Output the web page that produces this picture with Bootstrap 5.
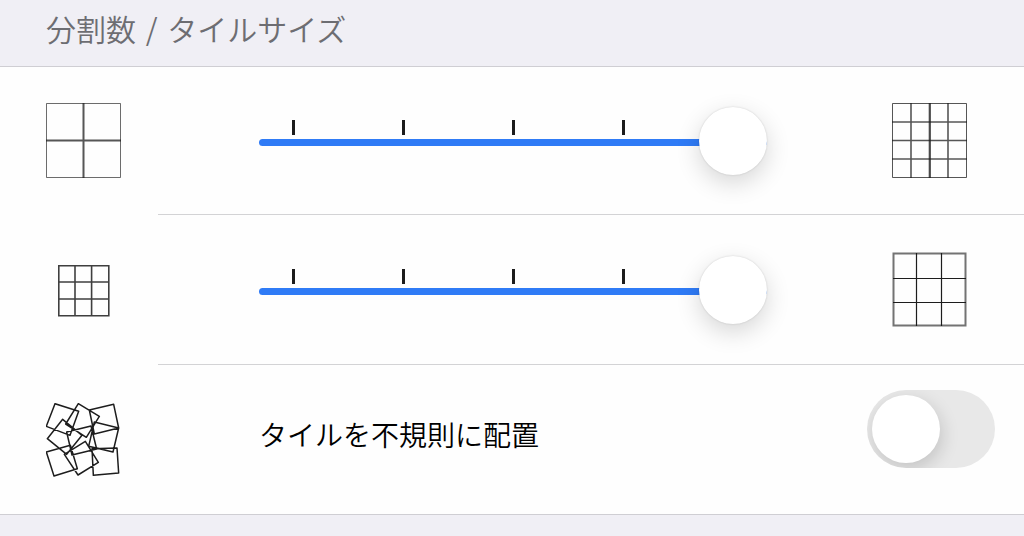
<!DOCTYPE html>
<html lang="ja">
<head>
<meta charset="utf-8">
<meta name="viewport" content="width=device-width, initial-scale=1">
<title>分割数 / タイルサイズ</title>
<link href="https://cdn.jsdelivr.net/npm/bootstrap@5.3.0/dist/css/bootstrap.min.css" rel="stylesheet">
<style>
  body { background: #f0eff5; font-family: "Noto Sans CJK JP", sans-serif; font-weight: 350; color: #000; }
  .section-title { font-size: 30px; line-height: 44px; font-weight: 350; color: #6d6d72; padding: 6px 46px 16px; }
  .section-title span { margin: 0 3px; }
  .settings { background: #fefefe; border-top: 1px solid #cfced3; border-bottom: 1px solid #cfced3; }
  .setting { min-height: 147px; }
  .setting-icon { width: 158px; padding-left: 46px; }
  .setting-icon svg, .setting-end svg { display: block; width: 75px; height: 75px; }
  .setting-body { padding-left: 101px; }
  .setting + .setting .setting-body { border-top: 1px solid #d3d3d5; }
  .setting + .setting .setting-icon { padding-top: 2px; }
  .setting + .setting { min-height: 150px; }
  .setting-end { padding-right: 57px; padding-left: 125px; }
  .slider-box { padding-top: 3px; }
  .tick-row { top: 15px; left: 34px; right: 33px; }
  .tick-row span { width: 3px; height: 15px; background: #1c1c1c; margin-left: -1px; margin-right: -1px; }
  .slider { height: 68px; }
  .slider::-webkit-slider-runnable-track { height: 7px; border-radius: 4px; background: linear-gradient(to right, #2f7bf6 var(--fill), #e4e4e6 var(--fill)); }
  .slider::-webkit-slider-thumb { width: 68px; height: 68px; margin-top: -32px; border-radius: 50%; background: #fff; box-shadow: 0 0 2px rgba(0,0,0,.16), 0 8px 24px rgba(0,0,0,.16); }
  .slider::-webkit-slider-thumb:active { background: #fff; }
  .slider:focus::-webkit-slider-thumb { box-shadow: 0 0 2px rgba(0,0,0,.16), 0 8px 24px rgba(0,0,0,.16); }
  .toggle-label { font-size: 28px; line-height: 40px; padding-top: 49px; }
  .toggle-end { padding: 25px 29px 0 0; }
  .toggle { appearance: none; display: block; width: 128px; height: 78px; margin: 0; padding: 5px; border-radius: 39px; background: #e8e8e8; overflow: hidden; }
  .toggle::before { content: ""; display: block; width: 68px; height: 68px; border-radius: 50%; background: #fff; box-shadow: 2px 6px 18px rgba(0,0,0,.16); }
  .toggle:checked { background: #34c759; }
  .toggle:checked::before { margin-left: auto; }
</style>
</head>
<body>
<main>
  <h1 class="section-title m-0">分割数 <span>/</span> タイルサイズ</h1>
  <div class="settings">
    <div class="setting d-flex">
      <div class="setting-icon d-flex align-items-center flex-shrink-0">
        <svg viewBox="0 0 75 75" fill="none" stroke="#1d1d1d" aria-hidden="true">
          <path d="M.5 .5h74v74H.5z" stroke-opacity=".65"/>
          <path d="M37.5 0v75M0 37.5h75" stroke-width="2" stroke-opacity=".75"/>
        </svg>
      </div>
      <div class="setting-body d-flex align-items-center flex-grow-1">
        <div class="slider-box position-relative flex-grow-1">
          <div class="tick-row position-absolute d-flex justify-content-between"><span></span><span></span><span></span><span></span><span></span></div>
          <input class="slider form-range d-block position-relative" type="range" min="0" max="4" value="4" aria-label="分割数" style="--fill:100%">
        </div>
        <div class="setting-end">
          <svg viewBox="0 0 75 75" fill="none" stroke="#1d1d1d" aria-hidden="true">
            <path d="M.5 .5h74v74H.5z" stroke-opacity=".75"/>
            <path d="M19 0v75M56 0v75M0 19h75M0 37.5h75M0 56h75" stroke-width="1.6" stroke-opacity=".75"/>
            <path d="M37.8 0v75" stroke-width="2.2" stroke-opacity=".8"/>
          </svg>
        </div>
      </div>
    </div>

    <div class="setting d-flex">
      <div class="setting-icon d-flex align-items-center flex-shrink-0">
        <svg viewBox="0 0 75 75" fill="none" stroke="#1d1d1d" stroke-width="1.6" stroke-opacity=".85" aria-hidden="true">
          <path d="M12.8 12.8h50v50h-50zM29 12v51M45.6 12v51M12 29h51M12 46h51"/>
        </svg>
      </div>
      <div class="setting-body d-flex align-items-center flex-grow-1">
        <div class="slider-box position-relative flex-grow-1">
          <div class="tick-row position-absolute d-flex justify-content-between"><span></span><span></span><span></span><span></span><span></span></div>
          <input class="slider form-range d-block position-relative" type="range" min="0" max="4" value="4" aria-label="タイルサイズ" style="--fill:100%">
        </div>
        <div class="setting-end">
          <svg viewBox="0 0 75 75" fill="none" stroke="#1d1d1d" aria-hidden="true">
            <path d="M1.5 1.5h72v72h-72z" stroke-width="2" stroke-opacity=".62"/>
            <path d="M24.5 1v73M49.5 1v73M1 26.5h73M1 50.5h73" stroke-width="1.2"/>
          </svg>
        </div>
      </div>
    </div>

    <div class="setting d-flex">
      <div class="setting-icon d-flex align-items-center flex-shrink-0">
        <svg viewBox="30 33 225 225" fill="none" stroke="#1d1d1d" stroke-width="4.5" stroke-linejoin="round" aria-hidden="true">
          <path d="M57 35l71 23-26 72-71-27zM127 35l63 38-39 63-62-40zM160 54l73-17 15 71-73 18zM80 82l58 48-46 57-58-47zM92 120l73-18 17 69-74 18zM175 90l73 18-17 72-73-17zM31 180l72-20 21 70-70 22zM148 148l39 63-61 38-41-62zM168 170l75-2 5 75-76 7z"/>
        </svg>
      </div>
      <div class="setting-body d-flex align-items-start flex-grow-1">
        <label class="toggle-label flex-grow-1" for="irregular">タイルを不規則に配置</label>
        <div class="toggle-end">
          <input class="toggle" type="checkbox" role="switch" id="irregular">
        </div>
      </div>
    </div>
  </div>
</main>
<script src="https://cdn.jsdelivr.net/npm/bootstrap@5.3.0/dist/js/bootstrap.bundle.min.js"></script>
<script>
  document.querySelectorAll('.slider').forEach(function (s) {
    s.addEventListener('input', function () { s.style.setProperty('--fill', s.value / s.max * 100 + '%'); });
  });
</script>
</body>
</html>
